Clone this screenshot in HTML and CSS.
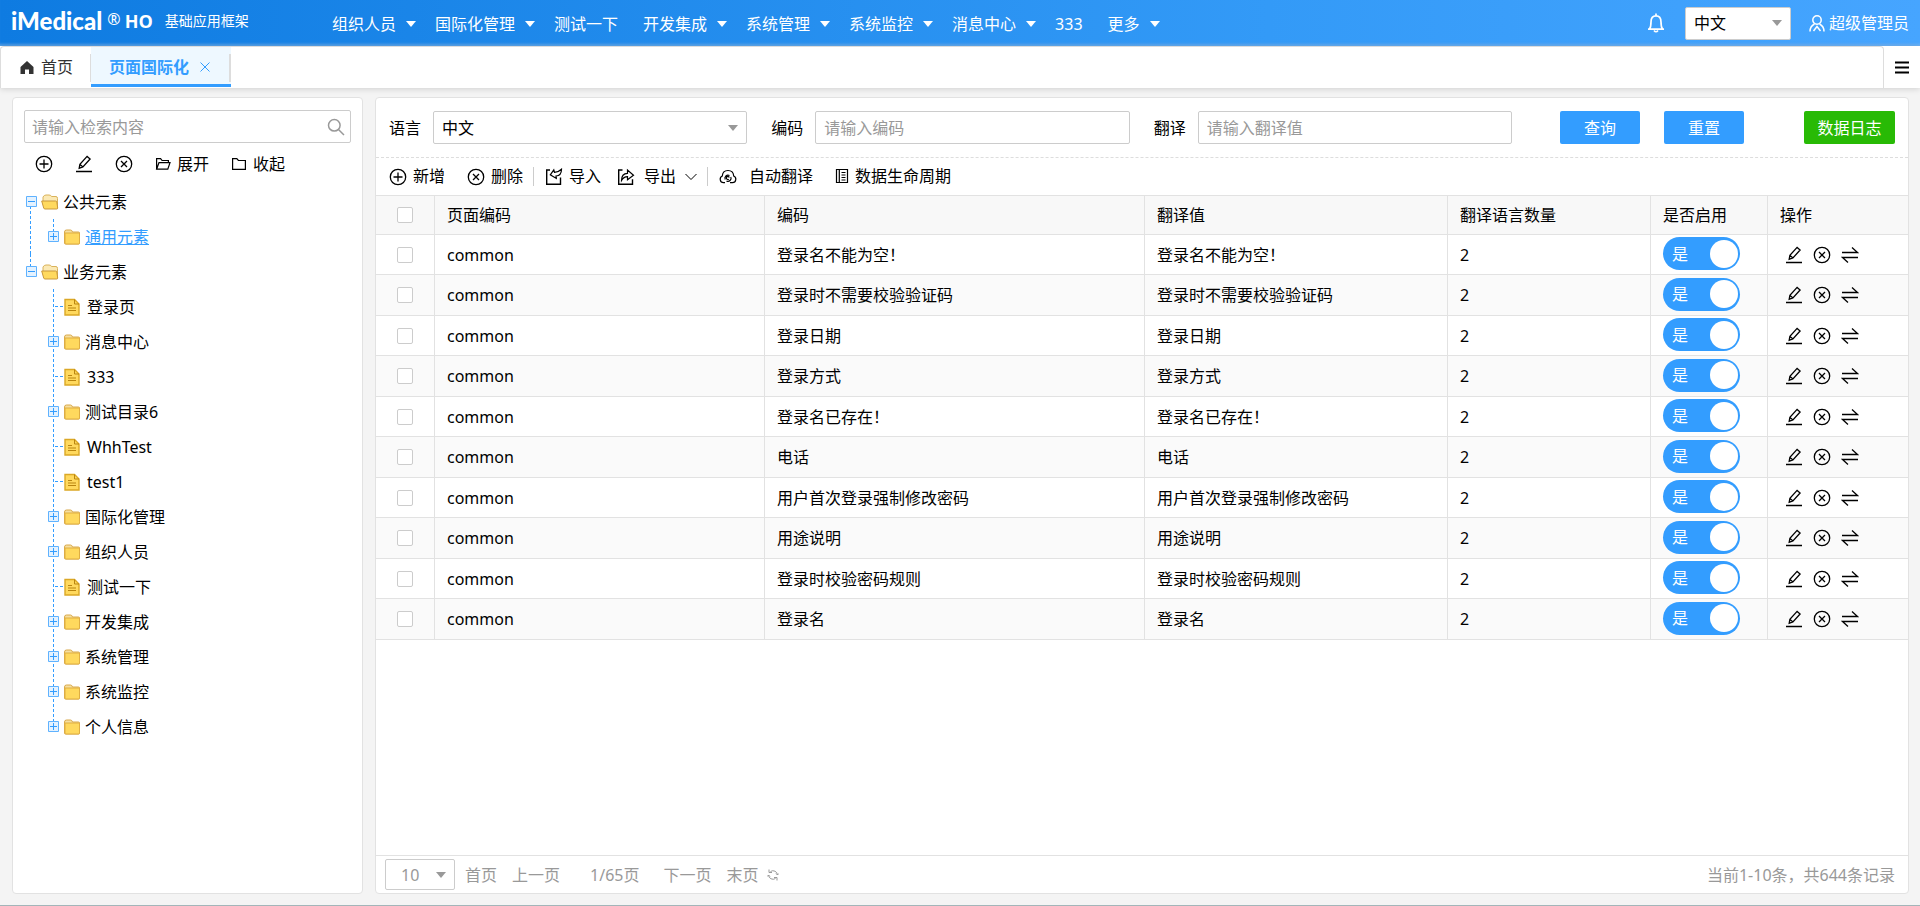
FILE: index.html
```html
<!DOCTYPE html>
<html lang="zh-CN">
<head>
<meta charset="utf-8">
<title>页面国际化</title>
<link rel="stylesheet" href="styles.css">
</head>
<body>
<svg class="sprite" aria-hidden="true">
  <symbol id="i-plus" viewBox="0 0 18 18"><g fill="none" stroke="currentColor" stroke-width="1.3"><circle cx="9" cy="9" r="7.7"/><path d="M9 4.5v9M4.5 9h9"/></g></symbol>
  <symbol id="i-cancel" viewBox="0 0 18 18"><g fill="none" stroke="currentColor" stroke-width="1.3"><circle cx="9" cy="9" r="7.7"/><path d="M6 6l6 6M12 6l-6 6"/></g></symbol>
  <symbol id="i-edit" viewBox="0 0 18 18"><g fill="none" stroke="currentColor" stroke-width="1.3"><path d="M1 16.5h16M4.2 13.2l.7-3.8 7.2-8 3 2.6-7.2 8zM5 9.5l3 2.4"/></g></symbol>
  <symbol id="i-swap" viewBox="0 0 18 18"><g fill="none" stroke="currentColor" stroke-width="1.3"><path d="M1 6.5h15.5L11 1.500M17 11.500H1.500L7 16.500"/></g></symbol>
  <symbol id="i-open" viewBox="0 0 16 16"><g fill="none" stroke="currentColor" stroke-width="1.2"><path d="M1.600 13V2.600h4l1.500 1.900h6.300v2M1.600 13.200L4 6.600h11L12.800 13.200z"/></g></symbol>
  <symbol id="i-closed" viewBox="0 0 16 16"><path fill="none" stroke="currentColor" stroke-width="1.2" d="M1.600 2.600h4.200l1.600 1.900h7v8.900H1.600z"/></symbol>
  <symbol id="i-search" viewBox="0 0 18 18"><g fill="none" stroke="currentColor" stroke-width="1.5"><circle cx="7.300" cy="7.300" r="5.800"/><path d="M11.500 11.500l5.500 5.500"/></g></symbol>
  <symbol id="i-caret" viewBox="0 0 10 6"><path fill="currentColor" d="M0 0h10L5 6z"/></symbol>
  <symbol id="i-import" viewBox="0 0 18 18"><g fill="none" stroke="currentColor" stroke-width="1.400"><path d="M5 2H1.700v14.300h13.800V9.500"/><path stroke-width="1.200" d="M16.500 1.200c0 4-2 6.500-5.500 6.800l.3 2.400-6-3.600L8.800 1.900l.7 2.500c2.800 0 4.800-1.200 7-3.200z"/></g></symbol>
  <symbol id="i-export" viewBox="0 0 18 18"><g fill="none" stroke="currentColor" stroke-width="1.400"><path d="M5.500 2H1.700v14.300h13.800v-5"/><path stroke-width="1.200" d="M4.500 12.500c0-5 2-7 6-7.200V2l6 5.200-6 4.600V8.600c-3 0-4.500 1.200-6 3.900z"/></g></symbol>
  <symbol id="i-cloud" viewBox="0 0 18 18"><g fill="none" stroke="currentColor" stroke-width="1.200"><path d="M6 14.700H4.500A3.500 3.500 0 0 1 3.300 8C3.500 4.500 6 2.500 9 2.500S14.500 4.500 14.700 8a3.500 3.500 0 0 1-1.200 6.700H11"/><path d="M6.200 11.500A3.100 3.100 0 0 1 10.500 7.500M11.800 9A3.100 3.100 0 0 1 7.500 13M10.300 9.500a1.500 1.500 0 1 0-.5 1.700"/></g></symbol>
  <symbol id="i-book" viewBox="0 0 14 18"><path fill="none" stroke="currentColor" stroke-width="1.200" d="M1.500 1.500h11v13h-11zM4.300 1.500v13M6.500 4.500h4M6.500 7h4M6.500 9.500h4M6.500 12h4"/></symbol>
  <symbol id="t-minus" viewBox="0 0 11 11"><path fill="#e4f2ff" stroke="#5fb2ff" d="M.500.500h10v10H.500z"/><path stroke="#339dff" d="M2 5.500h7"/></symbol>
  <symbol id="t-plus" viewBox="0 0 11 11"><path fill="#e4f2ff" stroke="#5fb2ff" d="M.500.500h10v10H.500z"/><path stroke="#339dff" d="M2 5.500h7M5.500 2v7"/></symbol>
  <symbol id="t-folder" viewBox="0 0 18 18"><path fill="#f6dfa0" stroke="#d9a94a" d="M1.500 4q0-2 2-2h4q1.500 0 2 2h6q1 0 1 1v10q0 1-1 1h-13q-1 0-1-1z"/><path fill="#ffd95e" stroke="#dfae43" d="M2 5h14.500V15q0 1-1 1H3q-1 0-1-1z"/></symbol>
  <symbol id="t-folder-open" viewBox="0 0 18 18"><path fill="#fbe9b4" stroke="#d9b25a" d="M2 9V4q1-2 3-2h3q2 0 2.500 1.500h4.500q1.500 0 1.500 2V15H4z"/><path fill="#ffd95e" stroke="#c9973a" d="M.7 8h14q1 0 1.100 1l.9 6q0 1-1 1H4q-1 0-1.300-1z"/></symbol>
  <symbol id="t-file" viewBox="0 0 18 18"><path fill="#ffd95e" stroke="#dba826" stroke-width="1.400" d="M2 1.500h9.500L16 6v11H2z"/><path fill="none" stroke="#b98510" d="M11.500 1.500V6H16M5 7.500h4M5 10h8M5 12.500h8"/></symbol>
  <symbol id="t-dash" viewBox="0 0 11 11"><path stroke="#339dff" stroke-dasharray="3 2" d="M7 5.500h9"/></symbol>
</svg>

<header class="topbar">
  <div class="brand"><strong>iMedical</strong><sup>®</sup><b>HO</b><span>基础应用框架</span></div>
  <nav class="menu">
    <a href="#">组织人员<svg class="caret"><use href="#i-caret"/></svg></a>
    <a href="#">国际化管理<svg class="caret"><use href="#i-caret"/></svg></a>
    <a href="#" class="plain">测试一下</a>
    <a href="#">开发集成<svg class="caret"><use href="#i-caret"/></svg></a>
    <a href="#">系统管理<svg class="caret"><use href="#i-caret"/></svg></a>
    <a href="#">系统监控<svg class="caret"><use href="#i-caret"/></svg></a>
    <a href="#">消息中心<svg class="caret"><use href="#i-caret"/></svg></a>
    <a href="#" class="plain">333</a>
    <a href="#">更多<svg class="caret"><use href="#i-caret"/></svg></a>
  </nav>
  <div class="account">
    <button class="bare" aria-label="通知"><svg class="bell" viewBox="0 0 18 20" fill="none" stroke="currentColor" stroke-width="1.700"><path d="M1 16.200h16M2.500 16c1.500-2 1.500-4 1.500-7 0-4 2-6.200 5-6.200S14 5 14 9c0 3 0 5 1.500 7M9 .5v2M7 17.500q2 2.500 4 0"/></svg></button>
    <div class="select head-select"><select aria-label="界面语言"><option>中文</option></select><svg class="caret"><use href="#i-caret"/></svg></div>
    <a href="#" class="user"><svg viewBox="0 0 16 17" fill="none" stroke="currentColor" stroke-width="1.500"><circle cx="8" cy="5" r="4.200"/><path d="M5.500 9C2.500 10.500 1 13 1 16.500M10.500 9c3 1.500 4.500 4 4.500 7.500M4.500 16L8 11.500l3.500 4.500"/></svg>超级管理员</a>
  </div>
</header>

<div class="tabs">
  <div class="tab-list">
    <a href="#" class="tab home"><svg viewBox="0 0 14 13"><path fill="currentColor" d="M7 0l6.500 6v7H9V8.500H5V13H.500V6z"/></svg>首页</a>
    <a href="#" class="tab active">页面国际化<svg viewBox="0 0 10 10" stroke="currentColor"><path d="M.500.500l9 9M9.500.500l-9 9"/></svg></a>
  </div>
  <button class="bare tab-menu" aria-label="菜单"><svg viewBox="0 0 14 13"><path stroke="currentColor" stroke-width="2" d="M0 1.500h14M0 6.500h14M0 11.500h14"/></svg></button>
</div>

<main class="workspace">
  <aside class="panel side">
    <div class="search"><input type="text" aria-label="检索" placeholder="请输入检索内容"><button class="bare" aria-label="搜索"><svg class="ico"><use href="#i-search"/></svg></button></div>
    <div class="side-tools">
      <button class="bare" aria-label="新增"><svg class="ico"><use href="#i-plus"/></svg></button>
      <button class="bare" aria-label="修改"><svg class="ico"><use href="#i-edit"/></svg></button>
      <button class="bare" aria-label="删除"><svg class="ico"><use href="#i-cancel"/></svg></button>
      <button class="bare"><svg class="ico small"><use href="#i-open"/></svg>展开</button>
      <button class="bare"><svg class="ico small"><use href="#i-closed"/></svg>收起</button>
    </div>
    <ul class="tree">
      <li>
        <div class="node"><svg class="exp"><use href="#t-minus"/></svg><svg class="ico"><use href="#t-folder-open"/></svg>公共元素</div>
        <ul>
          <li class="node"><svg class="exp"><use href="#t-plus"/></svg><svg class="ico"><use href="#t-folder"/></svg><a href="#">通用元素</a></li>
        </ul>
      </li>
      <li>
        <div class="node"><svg class="exp"><use href="#t-minus"/></svg><svg class="ico"><use href="#t-folder-open"/></svg>业务元素</div>
        <ul>
          <li class="node leaf"><svg class="exp"><use href="#t-dash"/></svg><svg class="ico"><use href="#t-file"/></svg><span>登录页</span></li>
          <li class="node"><svg class="exp"><use href="#t-plus"/></svg><svg class="ico"><use href="#t-folder"/></svg>消息中心</li>
          <li class="node leaf"><svg class="exp"><use href="#t-dash"/></svg><svg class="ico"><use href="#t-file"/></svg><span>333</span></li>
          <li class="node"><svg class="exp"><use href="#t-plus"/></svg><svg class="ico"><use href="#t-folder"/></svg>测试目录6</li>
          <li class="node leaf"><svg class="exp"><use href="#t-dash"/></svg><svg class="ico"><use href="#t-file"/></svg><span>WhhTest</span></li>
          <li class="node leaf"><svg class="exp"><use href="#t-dash"/></svg><svg class="ico"><use href="#t-file"/></svg><span>test1</span></li>
          <li class="node"><svg class="exp"><use href="#t-plus"/></svg><svg class="ico"><use href="#t-folder"/></svg>国际化管理</li>
          <li class="node"><svg class="exp"><use href="#t-plus"/></svg><svg class="ico"><use href="#t-folder"/></svg>组织人员</li>
          <li class="node leaf"><svg class="exp"><use href="#t-dash"/></svg><svg class="ico"><use href="#t-file"/></svg><span>测试一下</span></li>
          <li class="node"><svg class="exp"><use href="#t-plus"/></svg><svg class="ico"><use href="#t-folder"/></svg>开发集成</li>
          <li class="node"><svg class="exp"><use href="#t-plus"/></svg><svg class="ico"><use href="#t-folder"/></svg>系统管理</li>
          <li class="node"><svg class="exp"><use href="#t-plus"/></svg><svg class="ico"><use href="#t-folder"/></svg>系统监控</li>
          <li class="node"><svg class="exp"><use href="#t-plus"/></svg><svg class="ico"><use href="#t-folder"/></svg>个人信息</li>
        </ul>
      </li>
    </ul>
  </aside>

  <section class="panel content">
    <form class="filters">
      <label for="lang">语言</label>
      <div class="select field"><select id="lang"><option>中文</option></select><svg class="caret"><use href="#i-caret"/></svg></div>
      <label for="code">编码</label>
      <input class="field" id="code" type="text" placeholder="请输入编码">
      <label for="trans">翻译</label>
      <input class="field" id="trans" type="text" placeholder="请输入翻译值">
      <button class="btn query" type="button">查询</button>
      <button class="btn" type="button">重置</button>
      <button class="btn log" type="button">数据日志</button>
    </form>
    <div class="toolbar">
      <div class="group wide">
        <button class="bare"><svg class="ico"><use href="#i-plus"/></svg>新增</button>
        <button class="bare"><svg class="ico"><use href="#i-cancel"/></svg>删除</button>
      </div>
      <div class="group">
        <button class="bare"><svg class="ico"><use href="#i-import"/></svg>导入</button>
        <button class="bare loose"><svg class="ico"><use href="#i-export"/></svg>导出<svg class="chevron" viewBox="0 0 12 8" fill="none" stroke="currentColor"><path d="M.500 1L6 6.500 11.500 1"/></svg></button>
      </div>
      <div class="group wide">
        <button class="bare auto"><svg class="ico"><use href="#i-cloud"/></svg>自动翻译</button>
        <button class="bare"><svg class="book"><use href="#i-book"/></svg>数据生命周期</button>
      </div>
    </div>
    <div class="table-wrap">
      <table class="grid">
        <colgroup><col class="c-check"><col class="c-page"><col class="c-code"><col class="c-value"><col class="c-count"><col class="c-on"><col class="c-ops"></colgroup>
        <thead><tr><th class="check"><input type="checkbox" aria-label="全选"></th><th>页面编码</th><th>编码</th><th>翻译值</th><th>翻译语言数量</th><th>是否启用</th><th>操作</th></tr></thead>
        <tbody>
          <tr><td class="check"><input type="checkbox" aria-label="选择"></td><td>common</td><td>登录名不能为空！</td><td>登录名不能为空！</td><td>2</td><td><label class="toggle"><input type="checkbox" checked><span>是</span></label></td><td><div class="ops"><button class="bare" aria-label="修改"><svg class="ico"><use href="#i-edit"/></svg></button><button class="bare" aria-label="删除"><svg class="ico"><use href="#i-cancel"/></svg></button><button class="bare" aria-label="翻译"><svg class="ico"><use href="#i-swap"/></svg></button></div></td></tr>
          <tr><td class="check"><input type="checkbox" aria-label="选择"></td><td>common</td><td>登录时不需要校验验证码</td><td>登录时不需要校验验证码</td><td>2</td><td><label class="toggle"><input type="checkbox" checked><span>是</span></label></td><td><div class="ops"><button class="bare" aria-label="修改"><svg class="ico"><use href="#i-edit"/></svg></button><button class="bare" aria-label="删除"><svg class="ico"><use href="#i-cancel"/></svg></button><button class="bare" aria-label="翻译"><svg class="ico"><use href="#i-swap"/></svg></button></div></td></tr>
          <tr><td class="check"><input type="checkbox" aria-label="选择"></td><td>common</td><td>登录日期</td><td>登录日期</td><td>2</td><td><label class="toggle"><input type="checkbox" checked><span>是</span></label></td><td><div class="ops"><button class="bare" aria-label="修改"><svg class="ico"><use href="#i-edit"/></svg></button><button class="bare" aria-label="删除"><svg class="ico"><use href="#i-cancel"/></svg></button><button class="bare" aria-label="翻译"><svg class="ico"><use href="#i-swap"/></svg></button></div></td></tr>
          <tr><td class="check"><input type="checkbox" aria-label="选择"></td><td>common</td><td>登录方式</td><td>登录方式</td><td>2</td><td><label class="toggle"><input type="checkbox" checked><span>是</span></label></td><td><div class="ops"><button class="bare" aria-label="修改"><svg class="ico"><use href="#i-edit"/></svg></button><button class="bare" aria-label="删除"><svg class="ico"><use href="#i-cancel"/></svg></button><button class="bare" aria-label="翻译"><svg class="ico"><use href="#i-swap"/></svg></button></div></td></tr>
          <tr><td class="check"><input type="checkbox" aria-label="选择"></td><td>common</td><td>登录名已存在！</td><td>登录名已存在！</td><td>2</td><td><label class="toggle"><input type="checkbox" checked><span>是</span></label></td><td><div class="ops"><button class="bare" aria-label="修改"><svg class="ico"><use href="#i-edit"/></svg></button><button class="bare" aria-label="删除"><svg class="ico"><use href="#i-cancel"/></svg></button><button class="bare" aria-label="翻译"><svg class="ico"><use href="#i-swap"/></svg></button></div></td></tr>
          <tr><td class="check"><input type="checkbox" aria-label="选择"></td><td>common</td><td>电话</td><td>电话</td><td>2</td><td><label class="toggle"><input type="checkbox" checked><span>是</span></label></td><td><div class="ops"><button class="bare" aria-label="修改"><svg class="ico"><use href="#i-edit"/></svg></button><button class="bare" aria-label="删除"><svg class="ico"><use href="#i-cancel"/></svg></button><button class="bare" aria-label="翻译"><svg class="ico"><use href="#i-swap"/></svg></button></div></td></tr>
          <tr><td class="check"><input type="checkbox" aria-label="选择"></td><td>common</td><td>用户首次登录强制修改密码</td><td>用户首次登录强制修改密码</td><td>2</td><td><label class="toggle"><input type="checkbox" checked><span>是</span></label></td><td><div class="ops"><button class="bare" aria-label="修改"><svg class="ico"><use href="#i-edit"/></svg></button><button class="bare" aria-label="删除"><svg class="ico"><use href="#i-cancel"/></svg></button><button class="bare" aria-label="翻译"><svg class="ico"><use href="#i-swap"/></svg></button></div></td></tr>
          <tr><td class="check"><input type="checkbox" aria-label="选择"></td><td>common</td><td>用途说明</td><td>用途说明</td><td>2</td><td><label class="toggle"><input type="checkbox" checked><span>是</span></label></td><td><div class="ops"><button class="bare" aria-label="修改"><svg class="ico"><use href="#i-edit"/></svg></button><button class="bare" aria-label="删除"><svg class="ico"><use href="#i-cancel"/></svg></button><button class="bare" aria-label="翻译"><svg class="ico"><use href="#i-swap"/></svg></button></div></td></tr>
          <tr><td class="check"><input type="checkbox" aria-label="选择"></td><td>common</td><td>登录时校验密码规则</td><td>登录时校验密码规则</td><td>2</td><td><label class="toggle"><input type="checkbox" checked><span>是</span></label></td><td><div class="ops"><button class="bare" aria-label="修改"><svg class="ico"><use href="#i-edit"/></svg></button><button class="bare" aria-label="删除"><svg class="ico"><use href="#i-cancel"/></svg></button><button class="bare" aria-label="翻译"><svg class="ico"><use href="#i-swap"/></svg></button></div></td></tr>
          <tr><td class="check"><input type="checkbox" aria-label="选择"></td><td>common</td><td>登录名</td><td>登录名</td><td>2</td><td><label class="toggle"><input type="checkbox" checked><span>是</span></label></td><td><div class="ops"><button class="bare" aria-label="修改"><svg class="ico"><use href="#i-edit"/></svg></button><button class="bare" aria-label="删除"><svg class="ico"><use href="#i-cancel"/></svg></button><button class="bare" aria-label="翻译"><svg class="ico"><use href="#i-swap"/></svg></button></div></td></tr>
        </tbody>
      </table>
    </div>
    <footer class="pager">
      <div class="select size"><select aria-label="每页条数"><option>10</option></select><svg class="caret"><use href="#i-caret"/></svg></div>
      <a href="#" class="first">首页</a>
      <a href="#" class="prev">上一页</a>
      <span class="page">1/65页</span>
      <a href="#" class="next">下一页</a>
      <a href="#" class="last">末页</a>
      <button class="bare" aria-label="刷新"><svg class="refresh" viewBox="0 0 12 12" fill="none" stroke="currentColor"><path d="M3.500 2.500a4.500 4.500 0 0 1 7 3.500M8.500 9.500a4.500 4.500 0 0 1-7-3.500M2 .500v3h3M10 11.500v-3H7M.200 7.500L1.500 6l1.500 1.500M9 4.500L10.500 6l1.300-1.500"/></svg></button>
      <span class="total">当前1-10条，共644条记录</span>
    </footer>
  </section>
</main>
</body>
</html>
```

FILE: styles.css
```css
* { box-sizing: border-box; }

body {
  margin: 0;
  min-height: 100vh;
  display: flex;
  flex-direction: column;
  background: #f4f4f4;
  border-bottom: 1px solid #a3b5b9;
  color: #000;
  font: 16px/24px "Noto Sans", "Noto Sans CJK SC", sans-serif;
}

a { color: inherit; text-decoration: none; }
ul { list-style: none; margin: 0; padding: 0; }
svg { display: block; flex: none; }
.sprite { position: absolute; width: 0; height: 0; }
.ico { width: 18px; height: 18px; }
.ico.small { width: 16px; height: 16px; }
.caret { width: 10px; height: 6px; }

button, input, select { font: inherit; color: inherit; margin: 0; }
.bare {
  display: flex;
  align-items: center;
  gap: 6px;
  padding: 0;
  border: 0;
  background: none;
}
::placeholder { color: #999; opacity: 1; }

.select { display: grid; align-items: center; }
.select select {
  grid-area: 1 / 1;
  appearance: none;
  width: 100%;
  height: 100%;
  padding: 0 8px;
  border: 1px solid #ccc;
  border-radius: 2px;
  background: #fff;
}
.select .caret {
  grid-area: 1 / 1;
  justify-self: end;
  margin-right: 9px;
  color: #999;
  pointer-events: none;
}

/* Top bar */
.topbar {
  display: flex;
  align-items: center;
  height: 46px;
  padding: 0 11px 0 11px;
  background: linear-gradient(90deg, #0e7be1, #339af7 66%, #46a5ff);
  box-shadow: inset 0 -4px 3px -2px rgba(140, 190, 240, .6);
  color: #fff;
}
.brand { display: flex; flex: none; width: 321px; align-items: center; padding-bottom: 4px; }
.brand strong { font: 900 24px/24px Lato, sans-serif; }
.brand sup { font-size: 16px; line-height: 20px; margin: 0 4px 0 5px; align-self: flex-start; }
.brand b { font: 700 18px/24px "Open Sans", sans-serif; }
.brand span { font-size: 14px; margin-left: 12px; }
.menu { display: flex; flex: 1; gap: 19px; white-space: nowrap; padding-top: 2px; }
.menu a { display: flex; align-items: center; gap: 10px; }
.menu .plain { padding-right: 6px; }
.account { display: flex; align-items: center; gap: 18px; }
.bell { width: 18px; height: 20px; margin-right: 2px; }
.head-select { width: 106px; height: 33px; color: #000; }
.user { display: flex; align-items: center; gap: 4px; }
.user svg { width: 16px; height: 17px; }

/* Tabs */
.tabs {
  display: flex;
  height: 42px;
  background: #fff;
  box-shadow: 0 1px 6px rgba(0, 0, 0, .15);
}
.tab-list {
  display: flex;
  flex: 1;
  border: 1px solid #ddd;
  border-bottom: 0;
  border-radius: 4px 4px 0 0;
}
.tab {
  display: flex;
  align-items: center;
  height: 40px;
  color: #333;
  background: linear-gradient(#ddd, #ddd) right 7px / 1px 28px no-repeat;
}
.home { padding: 0 18px 0 19px; gap: 7px; }
.home svg { width: 14px; height: 13px; }
.active {
  padding: 3px 21px 0 18px;
  gap: 11px;
  background-color: #eef8ff;
  background-size: 2px 28px;
  border-bottom: 3px solid #339dff;
  color: #339dff;
  font-weight: bold;
}
.active svg { width: 10px; height: 10px; }
.tab-menu { padding: 0 11px; }
.tab-menu svg { width: 14px; height: 13px; }

/* Work area */
.workspace { flex: 1; display: flex; gap: 12px; padding: 9px 11px 11px 12px; }
.panel { background: #fff; border: 1px solid #e2e2e2; border-radius: 4px; }
.side { flex: none; width: 351px; padding: 12px 11px; }
.content { flex: 1; min-width: 0; display: flex; flex-direction: column; }

.search {
  display: flex;
  align-items: center;
  height: 33px;
  padding: 0 5px 0 7px;
  border: 1px solid #ccc;
  border-radius: 2px;
  color: #999;
}
.search input { flex: 1; min-width: 0; padding: 0; border: 0; outline: 0; background: none; }
.side-tools { display: flex; align-items: center; height: 41px; gap: 22px; padding-left: 11px; }

/* Tree */
.tree > li {
  background: repeating-linear-gradient(#339dff 0 3px, transparent 3px 5px) 6px 12px / 1px 100% no-repeat;
}
.tree > li:last-child { background-position: 6px 0; background-size: 1px 12px; }
.tree ul {
  background: repeating-linear-gradient(#339dff 0 3px, transparent 3px 5px) 29px 0 / 1px calc(100% - 17px) no-repeat;
}
.node { display: flex; align-items: center; gap: 4px; height: 35px; padding-left: 2px; }
.tree ul .node { padding-left: 24px; }
.node a { color: #339dff; text-decoration: underline; }
.leaf span { padding-left: 2px; }
.exp { width: 11px; height: 11px; overflow: visible; }
#t-dash { overflow: visible; }

/* Filters */
.filters {
  display: flex;
  align-items: center;
  height: 60px;
  padding: 0 13px;
  border-bottom: 1px dashed #ddd;
}
.filters label { flex: none; margin-right: 12px; }
.field { flex: 1 1 100px; min-width: 0; height: 33px; margin-right: 24px; }
input.field { padding: 0 8px; border: 1px solid #ccc; border-radius: 2px; }
.btn {
  flex: none;
  height: 33px;
  width: 80px;
  padding: 0;
  border: 0;
  border-radius: 2px;
  background: #339dff;
  color: #fff;
}
.query { margin: 0 24px; }
.log { width: 91px; margin-left: 60px; background: #28ba05; }

/* Toolbar */
.toolbar { display: flex; align-items: center; height: 38px; padding: 0 2px; border-bottom: 1px solid #e2e2e2; }
.group { display: flex; gap: 16px; padding: 0 10px 0 11px; line-height: 19px; }
.group.wide { gap: 22px; }
.group + .group { border-left: 1px solid #ccc; }
.loose { gap: 9px; }
.auto { gap: 12px; }
.chevron { width: 12px; height: 8px; }
.book { width: 14px; height: 18px; }

/* Table */
.table-wrap { flex: 1; }
.grid { width: 100%; table-layout: fixed; border-collapse: separate; border-spacing: 0; }
.c-check { width: 59px; }
.c-page { width: 330px; }
.c-code { width: 380px; }
.c-value { width: 303px; }
.c-count { width: 203px; }
.c-on { width: 117px; }
.c-ops { width: 140px; }
.grid th, .grid td {
  height: 40px;
  padding: 0 12px;
  border: 0 solid #e2e2e2;
  border-width: 0 1px 1px 0;
  font-weight: normal;
  text-align: left;
  white-space: nowrap;
}
.grid th { height: 39px; background: #f8f8f8; }
.grid tr:nth-child(even) td { height: 41px; background: #fafafa; }
.grid th:last-child, .grid td:last-child { border-right: 0; }
.check input {
  display: block;
  appearance: none;
  width: 16px;
  height: 16px;
  margin-left: 9px;
  border: 1px solid #ccc;
  border-radius: 2px;
  background: #fff;
}
.toggle { display: grid; width: 77px; height: 33px; margin-bottom: 2px; align-items: center; }
.toggle input {
  grid-area: 1 / 1;
  appearance: none;
  display: flex;
  justify-content: flex-end;
  align-items: center;
  width: 100%;
  height: 100%;
  padding-right: 2px;
  border-radius: 17px;
  background: #339dff;
}
.toggle input::before { content: ""; width: 28px; height: 28px; border-radius: 50%; background: #fff; }
.toggle span { grid-area: 1 / 1; padding-left: 9px; color: #fff; z-index: 1; }
.ops { display: flex; gap: 10px; padding-left: 5px; }

/* Pager */
.pager {
  display: flex;
  align-items: center;
  height: 38px;
  padding: 0 13px 0 9px;
  border-top: 1px solid #e2e2e2;
  color: #999;
}
.size { width: 70px; height: 31px; margin-right: 10px; }
.size select { padding-left: 15px; }
.first { margin-right: 15px; }
.prev { margin-right: 30px; }
.page { margin-right: 24px; }
.next { margin-right: 15px; }
.last { margin-right: 9px; }
.refresh { width: 12px; height: 12px; }
.total { margin-left: auto; }
```
